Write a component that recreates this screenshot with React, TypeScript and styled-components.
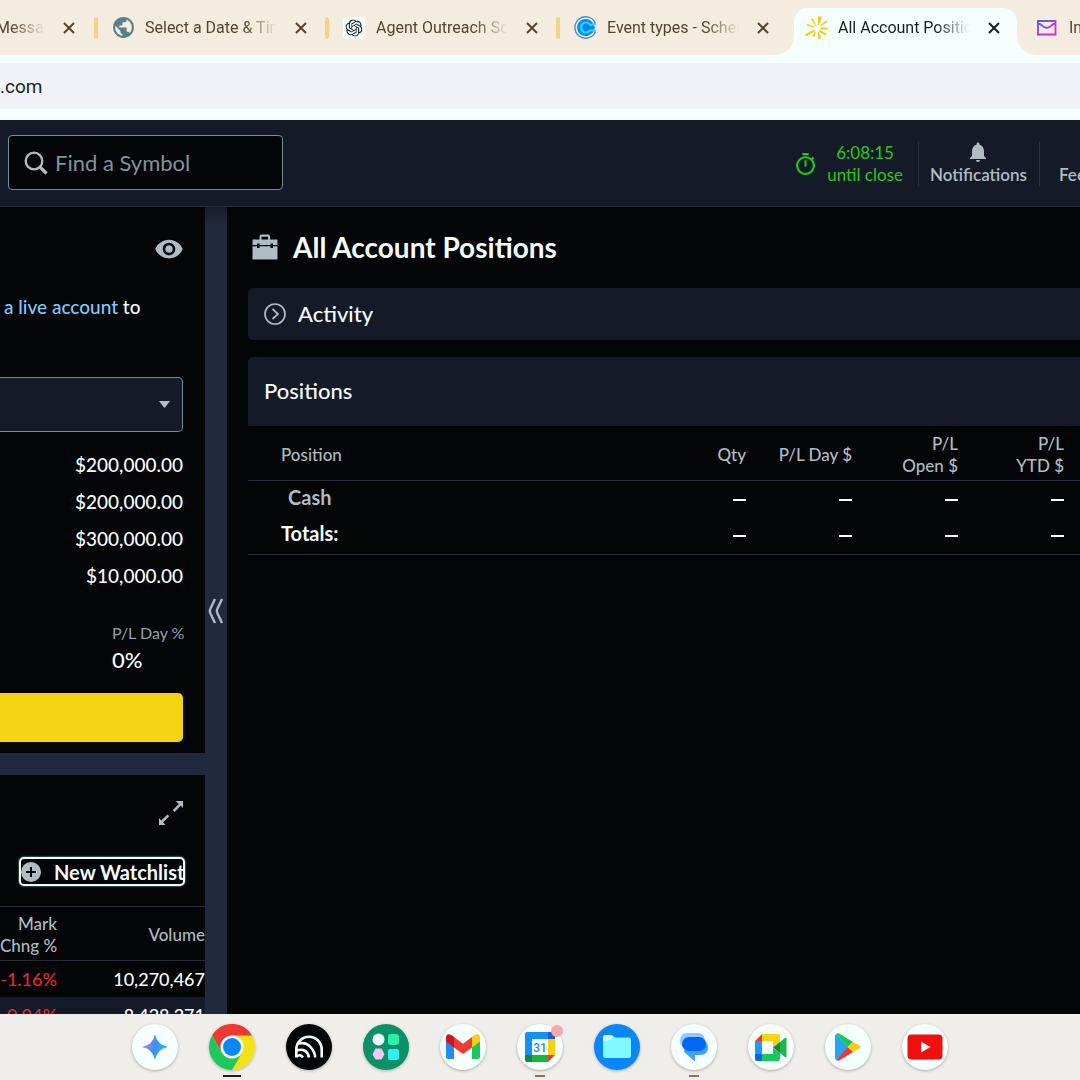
import React from "react";
import styled, { createGlobalStyle, css } from "styled-components";
import { SiOpenai } from "react-icons/si";
import { MdPublic, MdOutlineTimer, MdVisibility, MdNotifications } from "react-icons/md";

const color = {
  ink: "#030507",
  panel: "#141a28",
  gutter: "#20293d",
  line: "#242c3a",
  outline: "#768c92",
  text: "#f7fdfd",
  muted: "#afbcc3",
  link: "#83c7fb",
  green: "#27c916",
  red: "#e32636",
  yellow: "#f5d414",
  strip: "#f4ecde",
  chrome: "#f4fffe",
  shelf: "#efeeea",
};

const GlobalStyle = createGlobalStyle`
  *, *::before, *::after { box-sizing: border-box; }
  body { margin: 0; background: ${color.ink}; }
  button, input, select { font: inherit; color: inherit; }
  button { border: 0; padding: 0; background: none; cursor: pointer; }
  h1, h2, p, dl, dd, dt { margin: 0; font-weight: inherit; }
  svg { display: block; flex: none; }
`;

const Screen = styled.div`
  display: flex;
  flex-direction: column;
  height: 100vh;
  overflow: hidden;
  color: ${color.text};
  font-family: Lato, "Noto Sans", sans-serif;
  font-size: 19px;
  font-weight: 500;
  line-height: 24px;
`;

/* ---------- Browser chrome ---------- */

const TabStrip = styled.div`
  display: flex;
  flex: none;
  height: 55px;
  overflow: hidden;
  background: ${color.strip};
  font-family: Roboto, sans-serif;
  font-size: 16px;
  font-weight: 400;
  color: #54452c;
`;

const Tab = styled.div<{ $active?: boolean; $cut?: boolean }>`
  position: relative;
  display: flex;
  flex: none;
  align-items: center;
  width: ${(p) => (p.$cut ? 94 : 231)}px;
  color: ${(p) => (p.$active ? "#1b1c1e" : "inherit")};
  z-index: ${(p) => (p.$active ? 1 : 0)};
`;

const ActiveShape = styled.div`
  position: absolute;
  inset: 8px 1px 0 7px;
  z-index: -1;
  border-radius: 14px 14px 0 0;
  background: ${color.chrome};
  &::before,
  &::after {
    content: "";
    position: absolute;
    bottom: 0;
    width: 18px;
    height: 18px;
  }
  &::before {
    right: 100%;
    background: radial-gradient(circle at 0 0, transparent 17px, ${color.chrome} 18px);
  }
  &::after {
    left: 100%;
    background: radial-gradient(circle at 100% 0, transparent 17px, ${color.chrome} 18px);
  }
`;

const Divider = styled.span<{ $hidden?: boolean }>`
  width: 4px;
  height: 22px;
  margin-right: 14px;
  border-radius: 2px;
  background: ${(p) => (p.$hidden ? "transparent" : "#f2d484")};
`;

const Favicon = styled.span`
  display: flex;
  align-items: center;
  justify-content: center;
  width: 22px;
  height: 22px;
  margin-right: 11px;
`;

const TabTitle = styled.span<{ $width: number; $cut?: boolean }>`
  width: ${(p) => p.$width}px;
  margin-right: 17px;
  overflow: hidden;
  white-space: nowrap;
  line-height: 26px;
  text-indent: ${(p) => (p.$cut ? -4 : 0)}px;
  mask-image: linear-gradient(to right, #000 calc(100% - 34px), transparent);
`;

const CloseButton = styled.button`
  display: grid;
  place-items: center;
  width: 14px;
  height: 14px;
`;

const Toolbar = styled.div`
  flex: none;
  padding: 8px 0 11px;
  background: ${color.chrome};
`;

const AddressBar = styled.input`
  display: block;
  width: 100%;
  height: 46px;
  padding: 0;
  border: 0;
  outline: 0;
  background: #eff2f6;
  color: #1b1f24;
  font-family: Roboto, sans-serif;
  font-size: 19px;
  font-weight: 400;
`;

/* ---------- App header ---------- */

const Header = styled.header`
  display: flex;
  flex: none;
  align-items: flex-start;
  height: 87px;
  padding: 15px 0 0 8px;
  border-bottom: 1px solid #232b3c;
  background: ${color.panel};
`;

const SearchBox = styled.label`
  display: flex;
  align-items: center;
  gap: 7px;
  width: 275px;
  height: 55px;
  padding: 0 15px;
  border: 1px solid ${color.outline};
  border-radius: 4px;
  background: ${color.ink};
  color: ${color.muted};
`;

const SearchInput = styled.input`
  flex: 1;
  min-width: 0;
  padding: 0;
  border: 0;
  outline: 0;
  background: none;
  font-size: 22px;
  font-weight: 400;
  &::placeholder {
    color: #80949d;
    opacity: 1;
  }
`;

const HeaderTools = styled.div`
  display: flex;
  align-items: stretch;
  margin-left: auto;
  padding-top: 7px;
  font-size: 17px;
  line-height: 22px;
`;

const MarketClock = styled.div`
  display: flex;
  align-items: center;
  gap: 9px;
  padding-right: 15px;
  color: ${color.green};
  font-weight: 400;
  text-align: center;
`;

const HeaderButton = styled.button<{ $cut?: boolean }>`
  display: flex;
  flex-direction: column;
  align-items: center;
  justify-content: flex-end;
  height: 44px;
  padding: 0 12px 0 11px;
  border-left: 1px solid #2a3242;
  color: ${color.muted};
  font-weight: 600;
  ${(p) =>
    p.$cut &&
    css`
      align-items: flex-start;
      width: 41px;
      padding: 0 0 0 19px;
      overflow: hidden;
    `}
`;

/* ---------- Page body ---------- */

const Body = styled.div`
  display: flex;
  flex: 1;
  min-height: 0;
`;

const Sidebar = styled.aside`
  display: flex;
  flex-direction: column;
  gap: 22px;
  width: 205px;
  background: ${color.gutter};
`;

const Card = styled.section<{ $grow?: boolean }>`
  flex: ${(p) => (p.$grow ? "1" : "none")};
  min-height: 0;
  overflow: hidden;
  background: ${color.ink};
`;

const CardTools = styled.div<{ $top: number }>`
  display: flex;
  justify-content: flex-end;
  padding: ${(p) => p.$top}px 21px 0 0;
  color: ${color.muted};
`;

const Notice = styled.p`
  padding: 31px 0 0 4px;
  white-space: nowrap;
  a {
    color: ${color.link};
    text-decoration: none;
  }
`;

const SelectWrap = styled.div`
  position: relative;
  display: flex;
  align-items: center;
  justify-content: flex-end;
  height: 55px;
  margin: 58px 22px 14px 0;
  padding-right: 12px;
  border: 1px solid ${color.outline};
  border-left: 0;
  border-radius: 0 5px 5px 0;
  background: ${color.panel};
  color: ${color.muted};
`;

const AccountSelect = styled.select`
  position: absolute;
  inset: 0;
  width: 100%;
  border: 0;
  outline: 0;
  appearance: none;
  background: none;
`;

const Balances = styled.ul`
  margin: 0;
  padding: 0 22px 0 0;
  list-style: none;
  text-align: right;
  line-height: 37px;
`;

const DayChange = styled.dl`
  width: 93px;
  margin: 27px 0 0 auto;
  dt {
    color: #93a2aa;
    font-size: 16px;
    font-weight: 400;
    white-space: nowrap;
  }
  dd {
    font-size: 22px;
    line-height: 30px;
  }
`;

const TradeButton = styled.button`
  display: block;
  width: calc(100% - 22px);
  height: 49px;
  margin: 18px 0 11px;
  border-radius: 0 5px 5px 0;
  background: ${color.yellow};
`;

const NewWatchlist = styled.button`
  display: flex;
  align-items: center;
  gap: 13px;
  width: 166px;
  height: 29px;
  margin: 31px 20px 20px auto;
  border: 2px solid ${color.text};
  border-radius: 5px;
  box-shadow: 0 0 2px #9fc;
  font-size: 20px;
  font-weight: 700;
  white-space: nowrap;
`;

const WatchTable = styled.table`
  width: 100%;
  border-collapse: collapse;
  border-top: 1px solid ${color.line};
  table-layout: fixed;
  text-align: right;
  th {
    height: 54px;
    padding: 3px 0 0;
    border-bottom: 1px solid ${color.line};
    color: ${color.muted};
    font-size: 17px;
    font-weight: 500;
    line-height: 22px;
    white-space: nowrap;
  }
  td {
    height: 36px;
    padding: 0;
    font-size: 18px;
    white-space: nowrap;
  }
  th:first-child,
  td:first-child {
    width: 57px;
  }
  td:first-child {
    color: ${color.red};
  }
  tbody tr:nth-child(even) {
    background: ${color.panel};
  }
`;

const Gutter = styled.div`
  display: flex;
  align-items: center;
  justify-content: center;
  width: 22px;
  background: linear-gradient(#161d2c, ${color.gutter} 18px);
  color: ${color.muted};
`;

const Main = styled.main`
  flex: 1;
  min-width: 0;
  padding: 25px 0 0 21px;
`;

const TitleRow = styled.div`
  display: flex;
  align-items: center;
  gap: 15px;
  padding-left: 4px;
  color: ${color.muted};
`;

const Title = styled.h1`
  color: ${color.text};
  font-size: 28px;
  font-weight: 700;
  line-height: 30px;
`;

const ActivityBar = styled.button`
  display: flex;
  align-items: center;
  gap: 12px;
  width: 100%;
  height: 52px;
  margin: 26px 0 17px;
  padding-left: 16px;
  border-radius: 5px 0 0 5px;
  background: ${color.panel};
  font-size: 22px;
  font-weight: 500;
  svg {
    color: ${color.muted};
  }
`;

const SectionHead = styled.h2`
  padding: 19px 16px 20px;
  border-radius: 5px 0 0 0;
  background: ${color.panel};
  font-size: 22px;
  font-weight: 500;
  line-height: 30px;
`;

const PositionsTable = styled.table`
  width: 100%;
  border-collapse: collapse;
  table-layout: fixed;
  text-align: right;
  th,
  td {
    padding: 0 16px 4px 0;
  }
  thead tr,
  tbody tr:last-child {
    border-bottom: 1px solid ${color.line};
  }
  thead th {
    width: 106px;
    height: 54px;
    padding: 4px 16px 0 0;
    color: ${color.muted};
    font-size: 17px;
    font-weight: 500;
    line-height: 22px;
  }
  tbody th,
  tbody td {
    height: 37px;
    font-size: 20px;
    font-weight: 700;
  }
  thead th:first-child {
    width: auto;
  }
  th:first-child {
    padding-left: 33px;
    text-align: left;
  }
  tbody tr:first-child th {
    padding-left: 40px;
    color: ${color.muted};
  }
`;

const Dash = styled.span`
  display: inline-block;
  width: 13px;
  height: 2px;
  vertical-align: middle;
  background: ${color.text};
`;

/* ---------- Shelf ---------- */

const Shelf = styled.nav`
  display: flex;
  flex: none;
  gap: 31px;
  height: 66px;
  padding: 10px 0 0 132px;
  background: ${color.shelf};
`;

const AppButton = styled.button<{ $bg: string; $run?: string; $wide?: boolean }>`
  position: relative;
  display: grid;
  place-items: center;
  width: 46px;
  height: 46px;
  border-radius: 50%;
  background: ${(p) => p.$bg};
  box-shadow: 0 1px 3px rgba(60, 50, 50, 0.35);
  ${(p) =>
    p.$run &&
    css`
      &::after {
        content: "";
        position: absolute;
        top: 51px;
        width: ${p.$wide ? 18 : 10}px;
        height: 2px;
        background: ${p.$run};
      }
    `}
`;

const Badge = styled.span`
  position: absolute;
  top: 1px;
  right: 0;
  width: 12px;
  height: 12px;
  border-radius: 50%;
  background: #f3aaa9;
`;

/* ---------- Drawings ---------- */

const Cross = () => (
  <svg width="12" height="12" viewBox="0 0 12 12" stroke="currentColor" strokeWidth="2">
    <path d="M1 1l10 10M11 1L1 11" />
  </svg>
);

const CalendlyIcon = () => (
  <svg width="23" height="23" viewBox="0 0 23 23" fill="none">
    <path d="M21.500 7.300A10.700 10.700 0 1 0 21.500 15.700" stroke="#2f8fee" strokeWidth="1.300" />
    <path d="M19.500 8.300A8.500 8.500 0 1 0 19.500 14.700l1.500-3.200z" fill="#0c84f8" />
    <path d="M15.800 8.300a5 5 0 1 0 0 6.400M15.500 8.500q3 .800 6.500-1M15.500 14.500q3-.800 6.500 1" stroke="#18e0fb" strokeWidth="2.200" />
  </svg>
);

const ChatIcon = () => (
  <svg width="22" height="22" viewBox="0 0 22 22">
    <rect width="22" height="22" rx="3" fill="#f4fffe" />
    <SiOpenai x="2.5" y="2.5" size={17} color="#16242c" />
  </svg>
);

const SparkIcon = () => (
  <svg width="23" height="23" viewBox="0 0 23 23" fill="#f2cb17">
    <path d="M13 0l4 1-3 8h-1zM0 18.500l9-5 1 1.500-9 5.500zM6 3l1.500-.7L11 9l-1 .8zM1.800 9.500l.8-1.700 6.700 3-.3 1zM15 9.500l6-5 1.300 1.800-6.600 4zM15.500 11.500h7v2h-7zM15 14l6.500 3.800-1.200 1.800L14 15.500zM13 16h1.300l1.700 6.500-2.800.3zM9.500 16l1.500.5L9.500 21l-2-1z" />
  </svg>
);

const MailIcon = () => (
  <svg width="20" height="16" viewBox="0 0 20 16" fill="none" strokeWidth="1.800">
    <defs>
      <linearGradient id="mail" x1="0" y1="0" x2="1" y2="1">
        <stop offset="0" stopColor="#5b5bf0" />
        <stop offset="1" stopColor="#e424d8" />
      </linearGradient>
    </defs>
    <path d="M1 1h17.500v13.500H1zM1 2.500l6 4.500q2.700 1.500 5.500 0l6-4.500" stroke="url(#mail)" />
  </svg>
);

const SearchIcon = () => (
  <svg width="24" height="24" viewBox="0 0 24 24" fill="none" stroke="currentColor">
    <circle cx="10" cy="10" r="8.300" strokeWidth="2.300" />
    <path d="M16 16l6.500 6.500" strokeWidth="3.200" />
  </svg>
);

const ToolboxIcon = () => (
  <svg width="26" height="26" viewBox="0 0 26 26" fill="currentColor">
    <path d="M7.500 6V2.500Q7.500.500 9.500.500h6.500q2 0 2 2V6h-2V2.700H9.500V6z" />
    <path d="M1 5.500h24q.500 0 .500.500v5H21V9.500h-2.500V11h-11V9.500H5V11H.500V6q0-.500.500-.500z" />
    <path d="M.500 12.200H5V14h2.500v-1.800h11V14H21v-1.800h4.500V25q0 .500-.500.500H1Q.500 25.500.500 25z" />
  </svg>
);

const CircleChevron = () => (
  <svg width="22" height="22" viewBox="0 0 22 22" fill="none" stroke="currentColor" strokeWidth="1.700">
    <circle cx="11" cy="11" r="10" />
    <path d="M8.500 6l5.500 5-5.500 5" />
  </svg>
);

const Caret = () => (
  <svg width="11" height="7" viewBox="0 0 11 7" fill="currentColor">
    <path d="M0 0h11L6.500 6Q5.500 7 4.500 6z" />
  </svg>
);

const Collapse = () => (
  <svg width="16" height="26" viewBox="0 0 16 26" fill="none" stroke="currentColor" strokeWidth="2.400">
    <path d="M7 1L2.500 10.500Q1.200 13 2.500 15.500L7 25M14 1L9.500 10.500Q8.200 13 9.500 15.500L14 25" />
  </svg>
);

const ExpandIcon = () => (
  <svg width="26" height="26" viewBox="0 0 26 26" fill="currentColor">
    <path d="M17.500 1H25v7l-2.300-2.200-6.200 6.200-1.800-1.800 6.200-6.200zM9.500 14.500l1.800 1.800-6.200 6 2.400 2.700H1v-7l2.300 2.500z" />
  </svg>
);

const PlusCircle = () => (
  <svg width="20" height="20" viewBox="0 0 20 20">
    <circle cx="10" cy="10" r="10" fill={color.muted} />
    <path d="M10 5v10M5 10h10" stroke={color.ink} strokeWidth="2" />
  </svg>
);

const Gemini = () => (
  <svg width="26" height="26" viewBox="0 0 26 26">
    <defs>
      <linearGradient id="gem" x1="0" y1="0.300" x2="1" y2="0.600">
        <stop offset="0.100" stopColor="#a98bd0" />
        <stop offset="0.500" stopColor="#3d8ef5" />
        <stop offset="1" stopColor="#1fc4fb" />
      </linearGradient>
    </defs>
    <path d="M13 0q2 11 13 13-11 2-13 13Q11 15 0 13 11 11 13 0z" fill="url(#gem)" />
  </svg>
);

const Chrome = () => (
  <svg width="46" height="46" viewBox="0 0 46 46">
    <circle cx="23" cy="23" r="23" fill="#f6e114" />
    <path d="M3.100 11.500A23 23 0 0 1 43 11.500H23L13 28.700z" fill="#f03833" />
    <path d="M3.100 11.500A23 23 0 0 0 23 46l10-17.200-20 0z" fill="#1bc95c" />
    <circle cx="23" cy="23" r="11.500" fill="#f4fffe" />
    <circle cx="23" cy="23" r="9" fill="#0a86fb" />
  </svg>
);

const Arches = () => (
  <svg width="30" height="24" viewBox="0 0 30 24" fill="none" stroke="#f4fffe" strokeWidth="2.600">
    <path d="M2.300 22.500V14.500a12.700 12.700 0 0 1 25.400 0v8" />
    <path d="M5 8.500q7-1.500 11.500 3.500t4.700 10.500" />
    <path d="M2.500 15.500q10.500-3 12.500 7" />
    <path d="M2.500 21.500q3.500-3 6.500 1" />
  </svg>
);

const Launcher = () => (
  <svg width="28" height="28" viewBox="0 0 28 28">
    <circle cx="6.500" cy="6.500" r="6" fill="#f4fffe" />
    <rect x="16" y="1" width="11" height="11" rx="3" fill="#2cf0a8" />
    <path d="M3.500 15.500h6l3 5.700-3 5.300h-6l-3-5.300z" fill="#f0c8f2" />
    <rect x="16" y="16" width="11" height="11" rx="2" fill="#2ff0f5" />
  </svg>
);

const Gmail = () => (
  <svg width="34" height="26" viewBox="0 0 34 26">
    <path d="M0 4l8 6v15H2.500Q0 25 0 22.500z" fill="#1e8dfa" />
    <path d="M34 4l-8 6v15h5.500q2.500 0 2.500-2.500z" fill="#17c95b" />
    <path d="M26 3l3-2.200Q34-1 34 4v3.500l-8 6z" fill="#f6cf12" />
    <path d="M8 3L5 .800Q0-1 0 4v3.500l8 6z" fill="#c9161f" />
    <path d="M8 3l9 6.700L26 3v10.500l-9 6.500-9-6.500z" fill="#f03a36" />
  </svg>
);

const CalendarIcon = () => (
  <svg width="30" height="30" viewBox="0 0 30 30">
    <path d="M2 0h21v7H7v16H0V2q0-2 2-2z" fill="#1590fb" />
    <path d="M23 0h5q2 0 2 2v5h-7z" fill="#155fd8" />
    <path d="M23 7h7v16h-7z" fill="#f6d212" />
    <path d="M7 23h16v7H7z" fill="#17b53c" />
    <path d="M0 23h7v7H2q-2 0-2-2z" fill="#13883a" />
    <path d="M23 23h7l-7 7z" fill="#ee3a32" />
    <path d="M7 7h16v16H7z" fill="#f4fffe" />
    <text x="15" y="19.500" textAnchor="middle" fontFamily="Roboto, sans-serif" fontSize="12" fontWeight="500" fill="#2b8bd8">31</text>
  </svg>
);

const Files = () => (
  <svg width="28" height="24" viewBox="0 0 28 24">
    <path d="M0 2q0-2 2-2h7l3 3h14v6H0z" fill="#d8feff" />
    <path d="M10 2.500h16q2 0 2 2V21q0 2-2 2H2q-2 0-2-2V6q6 0 10-3.500z" fill="#80f9fe" />
  </svg>
);

const Messages = () => (
  <svg width="30" height="30" viewBox="0 0 30 30">
    <rect x="1" y="1" width="25" height="15" rx="7" fill="#93c8fa" />
    <path d="M8 8h13q8 0 8 7.500t-8 7.500h-5v6.500L5 20z" fill="#3fa2fb" />
    <rect x="3" y="5" width="24" height="14" rx="7" fill="#0565f5" />
  </svg>
);

const Meet = () => (
  <svg width="32" height="27" viewBox="0 0 32 27">
    <path d="M0 7h7v13H0z" fill="#2597fc" />
    <path d="M0 7l7-7v7z" fill="#ee3a36" />
    <path d="M7 0h16q2 0 2 2v8l-7 4V7H7z" fill="#f6d40f" />
    <path d="M0 20h7v7H2q-2 0-2-2z" fill="#0a66e8" />
    <path d="M7 20h11v-6l7 5v6q0 2-2 2H7z" fill="#17c95b" />
    <path d="M18 13.500l7-5.500v11z" fill="#11873b" />
    <path d="M25 8l5-4q1.500-1 1.500 1v17q0 2-1.500 1l-5-4z" fill="#17b94f" />
  </svg>
);

const Play = () => (
  <svg width="26" height="28" viewBox="0 0 26 28">
    <path d="M1 1l12 13L1 27Q0 26 0 24V4Q0 2 1 1z" fill="#23a4fb" />
    <path d="M1 1q2-1.500 4 0l13 8-5.500 5z" fill="#17c95b" />
    <path d="M18 9l6 3q3 2 0 4l-6 3-5.500-5z" fill="#f6cf12" />
    <path d="M1 27q2 1.500 4 0l13-8-5.500-5z" fill="#ee3a36" />
  </svg>
);

const YouTube = () => (
  <svg width="36" height="26" viewBox="0 0 36 26">
    <rect x="0.500" y="0.500" width="35" height="25" rx="4" fill="#f30f0f" />
    <path d="M14 7.500l9.500 5.500-9.500 5.500z" fill="#f4fffe" />
  </svg>
);

/* ---------- Data ---------- */

const tabs = [
  { title: "Select a Date & Time", icon: <MdPublic size={25} color="#56808a" /> },
  { title: "Agent Outreach Script", icon: <ChatIcon /> },
  { title: "Event types - Scheduling", icon: <CalendlyIcon /> },
  { title: "All Account Positions", icon: <SparkIcon />, active: true },
  { title: "Inbox", icon: <MailIcon />, plain: true },
];

const balances = ["$200,000.00", "$200,000.00", "$300,000.00", "$10,000.00"];

const apps = [
  { name: "Gemini", bg: "#f4fffe", icon: <Gemini /> },
  { name: "Chrome", bg: "#f4fffe", icon: <Chrome />, run: "#1c1c1c", wide: true },
  { name: "Arches", bg: "#050607", icon: <Arches /> },
  { name: "Launcher", bg: "#0b9067", icon: <Launcher /> },
  { name: "Gmail", bg: "#f4fffe", icon: <Gmail /> },
  { name: "Calendar", bg: "#f4fffe", icon: <CalendarIcon />, run: "#83764f", badge: true },
  { name: "Files", bg: "#0a86fb", icon: <Files /> },
  { name: "Messages", bg: "#f4fffe", icon: <Messages />, run: "#83764f" },
  { name: "Meet", bg: "#f4fffe", icon: <Meet /> },
  { name: "Play Store", bg: "#f4fffe", icon: <Play /> },
  { name: "YouTube", bg: "#f4fffe", icon: <YouTube /> },
];

export default function App() {
  return (
    <Screen>
      <GlobalStyle />
      <TabStrip>
        <Tab $cut>
          <TabTitle $width={45} $cut>Messages</TabTitle>
          <CloseButton aria-label="Close tab"><Cross /></CloseButton>
        </Tab>
        {tabs.map((t) => (
          <Tab key={t.title} $active={t.active}>
            {t.active && <ActiveShape />}
            <Divider $hidden={t.active || t.plain} />
            <Favicon>{t.icon}</Favicon>
            <TabTitle $width={132}>{t.title}</TabTitle>
            <CloseButton aria-label="Close tab"><Cross /></CloseButton>
          </Tab>
        ))}
      </TabStrip>
      <Toolbar>
        <AddressBar aria-label="Address" defaultValue=".com" />
      </Toolbar>

      <Header>
        <SearchBox>
          <SearchIcon />
          <SearchInput aria-label="Find a Symbol" placeholder="Find a Symbol" />
        </SearchBox>
        <HeaderTools>
          <MarketClock>
            <MdOutlineTimer size={25} />
            <div>
              6:08:15
              <br />
              until close
            </div>
          </MarketClock>
          <HeaderButton>
            <MdNotifications size={24} />
            Notifications
          </HeaderButton>
          <HeaderButton $cut>Feedback</HeaderButton>
        </HeaderTools>
      </Header>

      <Body>
        <Sidebar>
          <Card>
            <CardTools $top={27}>
              <button aria-label="Hide balances"><MdVisibility size={30} /></button>
            </CardTools>
            <Notice>
              <a href="#open">a live account</a> to
            </Notice>
            <SelectWrap>
              <AccountSelect aria-label="Account" />
              <Caret />
            </SelectWrap>
            <Balances>
              {balances.map((b, i) => (
                <li key={i}>{b}</li>
              ))}
            </Balances>
            <DayChange>
              <dt>P/L Day %</dt>
              <dd>0%</dd>
            </DayChange>
            <TradeButton aria-label="Trade" />
          </Card>
          <Card $grow>
            <CardTools $top={25}>
              <button aria-label="Expand"><ExpandIcon /></button>
            </CardTools>
            <NewWatchlist>
              <PlusCircle />
              New Watchlist
            </NewWatchlist>
            <WatchTable>
              <thead>
                <tr>
                  <th>Mark<br />Chng %</th>
                  <th>Volume</th>
                </tr>
              </thead>
              <tbody>
                <tr><td>-1.16%</td><td>10,270,467</td></tr>
                <tr><td>-0.94%</td><td>8,428,271</td></tr>
              </tbody>
            </WatchTable>
          </Card>
        </Sidebar>
        <Gutter>
          <button aria-label="Collapse panel"><Collapse /></button>
        </Gutter>
        <Main>
          <TitleRow>
            <ToolboxIcon />
            <Title>All Account Positions</Title>
          </TitleRow>
          <ActivityBar>
            <CircleChevron />
            Activity
          </ActivityBar>
          <SectionHead>Positions</SectionHead>
          <PositionsTable>
            <thead>
              <tr>
                <th>Position</th>
                <th>Qty</th>
                <th>P/L Day $</th>
                <th>P/L<br />Open $</th>
                <th>P/L<br />YTD $</th>
              </tr>
            </thead>
            <tbody>
              {["Cash", "Totals:"].map((name) => (
                <tr key={name}>
                  <th>{name}</th>
                  {[0, 1, 2, 3].map((n) => (
                    <td key={n}><Dash /></td>
                  ))}
                </tr>
              ))}
            </tbody>
          </PositionsTable>
        </Main>
      </Body>

      <Shelf>
        {apps.map((a) => (
          <AppButton key={a.name} aria-label={a.name} $bg={a.bg} $run={a.run} $wide={a.wide}>
            {a.icon}
            {a.badge && <Badge />}
          </AppButton>
        ))}
      </Shelf>
    </Screen>
  );
}
